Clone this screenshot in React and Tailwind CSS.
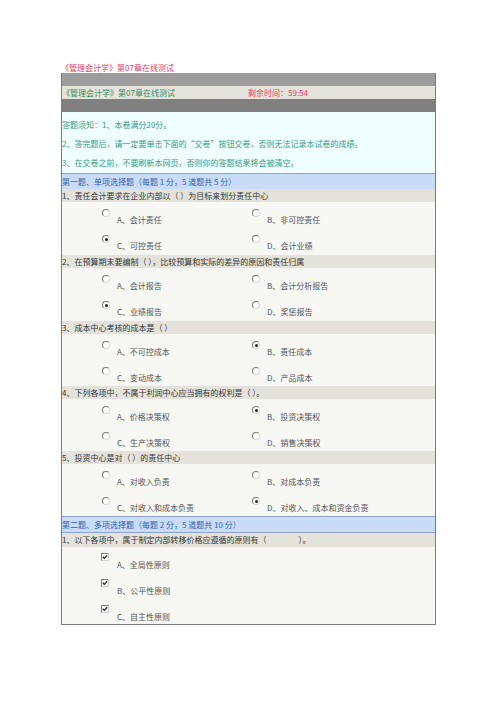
const font = { fontFamily: '"Noto Sans CJK SC", "Liberation Sans", sans-serif' };

const singles = [
  {
    q: '1、责任会计要求在企业内部以（ ）为目标来划分责任中心',
    opts: ['A、会计责任', 'B、非可控责任', 'C、可控责任', 'D、会计业绩'],
    pick: 2,
    h: 'h-[53px]',
  },
  {
    q: '2、在预算期末要编制（ ），比较预算和实际的差异的原因和责任归属',
    opts: ['A、会计报告', 'B、会计分析报告', 'C、业绩报告', 'D、奖惩报告'],
    pick: 2,
    h: 'h-[53px]',
  },
  {
    q: '3、成本中心考核的成本是（ ）',
    opts: ['A、不可控成本', 'B、责任成本', 'C、变动成本', 'D、产品成本'],
    pick: 1,
    h: 'h-[52px]',
  },
  {
    q: '4、下列各项中，不属于利润中心应当拥有的权利是（ ）。',
    opts: ['A、价格决策权', 'B、投资决策权', 'C、生产决策权', 'D、销售决策权'],
    pick: 1,
    h: 'h-[52px]',
  },
  {
    q: '5、投资中心是对（ ）的责任中心',
    opts: ['A、对收入负责', 'B、对成本负责', 'C、对收入和成本负责', 'D、对收入、成本和资金负责'],
    pick: 3,
    h: 'h-[52px]',
  },
];

const Radio = ({ checked }) => (
  <span className="mt-[7px] flex h-[8px] w-[8px] shrink-0 items-center justify-center rounded-full border border-t-[#7a7a7a] border-l-[#7a7a7a] border-r-[#d8d8d8] border-b-[#d8d8d8] bg-white">
    {checked && <span className="h-[3px] w-[3px] rounded-full bg-[#222]" />}
  </span>
);

const Check = () => (
  <span className="mt-[6px] flex h-[8px] w-[8px] shrink-0 items-center justify-center border border-t-[#7a7a7a] border-l-[#7a7a7a] border-r-[#d0d0d0] border-b-[#d0d0d0] bg-white">
    <svg width="6" height="6" viewBox="0 0 6 6">
      <path d="M0.8 2.8 L2.3 4.4 L5.2 1.2" fill="none" stroke="#222" strokeWidth="1.3" />
    </svg>
  </span>
);

const Option = ({ label, checked }) => (
  <div className="flex h-[26px] w-[150px] items-start gap-[7px]">
    <Radio checked={checked} />
    <span className="mt-[13px] text-[8px] leading-[10px] text-[#555]">{label}</span>
  </div>
);

const Question = ({ item }) => (
  <div>
    <div className="h-[13px] bg-[#e3e3dc] text-[8px] leading-[13px] text-[#333]">{item.q}</div>
    <div className={`${item.h} bg-[#f7f7f3] pl-[40px]`}>
      <div className="flex">
        <Option label={item.opts[0]} checked={item.pick === 0} />
        <Option label={item.opts[1]} checked={item.pick === 1} />
      </div>
      <div className="flex">
        <Option label={item.opts[2]} checked={item.pick === 2} />
        <Option label={item.opts[3]} checked={item.pick === 3} />
      </div>
    </div>
  </div>
);

export default function App() {
  return (
    <div className="min-h-[702px] bg-white pl-[61px] pt-[62px]" style={font}>
      <div className="h-[11px] text-[8px] leading-[11px] text-[#e0406a]">《管理会计学》第07章在线测试</div>

      <div className="w-[375px] border-x border-b border-[#7c7c7c]">
        <div className="h-[13px] bg-[#9c9c9c]" />
        <div className="flex h-[13px] bg-[#e4e4dc] text-[8px] leading-[13px]">
          <span className="w-[186px] text-[#3a8a62]">《管理会计学》第07章在线测试</span>
          <span className="text-[#e4405e]">剩余时间：59:54</span>
        </div>
        <div className="h-[13px] bg-[#808080]" />

        <div className="bg-[#effefe] pb-[1px] pt-[3px] text-[8px] text-[#3a9a84]">
          <div className="h-[19px] leading-[19px]">答题须知：1、本卷满分20分。</div>
          <div className="h-[19px] leading-[19px]">2、答完题后，请一定要单击下面的“交卷”按钮交卷，否则无法记录本试卷的成绩。</div>
          <div className="h-[19px] leading-[19px]">3、在交卷之前，不要刷新本网页，否则你的答题结果将会被清空。</div>
        </div>

        <div className="h-[16px] border-t border-[#8fa4c4] bg-[#c9dcf7] text-[8px] leading-[15px] text-[#3563a4]">
          第一题、单项选择题（每题 1 分，5 道题共 5 分）
        </div>
        {singles.map((item) => (
          <Question key={item.q} item={item} />
        ))}

        <div className="h-[17px] border-y border-[#8fa4c4] bg-[#c9dcf7] text-[8px] leading-[15px] text-[#3563a4]">
          第二题、多项选择题（每题 2 分，5 道题共 10 分）
        </div>
        <div className="h-[14px] bg-[#e3e3dc] text-[8px] leading-[14px] text-[#333]">
          1、以下各项中，属于制定内部转移价格应遵循的原则有（　　　　）。
        </div>
        <div className="h-[77px] bg-[#f7f7f3] pl-[39px]">
          {['A、全局性原则', 'B、公平性原则', 'C、自主性原则'].map((t) => (
            <div key={t} className="flex h-[26px] items-start gap-[8px]">
              <Check />
              <span className="mt-[13px] text-[8px] leading-[10px] text-[#555]">{t}</span>
            </div>
          ))}
        </div>
      </div>
    </div>
  );
}
